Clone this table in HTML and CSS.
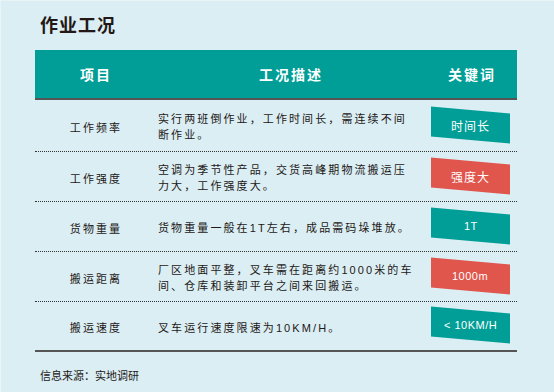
FILE: index.html
```html
<!DOCTYPE html>
<html lang="zh-CN">
<head>
<meta charset="utf-8">
<link rel="stylesheet" href="styles.css">
</head>
<body>
<div class="page">
  <h1 class="title">作业工况</h1>
  <div class="table">
    <div class="head">
      <div class="c1">项目</div>
      <div class="c2">工况描述</div>
      <div class="c3">关键词</div>
    </div>
    <div class="row first">
      <div class="c1">工作频率</div>
      <div class="c2 desc">实行两班倒作业，工作时间长，需连续不间断作业。</div>
      <div class="c3"><div class="tag teal"><span>时间长</span></div></div>
    </div>
    <div class="row">
      <div class="c1">工作强度</div>
      <div class="c2 desc">空调为季节性产品，交货高峰期物流搬运压力大，工作强度大。</div>
      <div class="c3"><div class="tag red"><span>强度大</span></div></div>
    </div>
    <div class="row">
      <div class="c1">货物重量</div>
      <div class="c2 desc">货物重量一般在1T左右，成品需码垛堆放。</div>
      <div class="c3"><div class="tag teal"><span class="latin">1T</span></div></div>
    </div>
    <div class="row">
      <div class="c1">搬运距离</div>
      <div class="c2 desc">厂区地面平整，叉车需在距离约1000米的车间、仓库和装卸平台之间来回搬运。</div>
      <div class="c3"><div class="tag red"><span class="latin">1000m</span></div></div>
    </div>
    <div class="row last">
      <div class="c1">搬运速度</div>
      <div class="c2 desc">叉车运行速度限速为10KM/H。</div>
      <div class="c3"><div class="tag teal"><span class="latin">&lt; 10KM/H</span></div></div>
    </div>
  </div>
  <p class="source">信息来源：实地调研</p>
</div>
</body>
</html>
```

FILE: styles.css
```css
html, body {
  margin: 0;
  padding: 0;
}
body {
  width: 554px;
  height: 392px;
  overflow: hidden;
  background: #dbeef4;
  font-family: "Liberation Sans", "Noto Sans CJK SC", sans-serif;
  color: #231815;
}
.page {
  box-sizing: border-box;
  width: 554px;
  height: 392px;
  padding-top: 13px;
  border-top: 1px solid #eaf4f7;
  border-left: 1px solid #eaf4f7;
}
.title {
  margin: 0 0 12px 39px;
  font-size: 18px;
  line-height: 24px;
  font-weight: bold;
  letter-spacing: 1px;
}
.table {
  margin-left: 34px;
  width: 482px;
}
.head, .row {
  display: grid;
  grid-template-columns: 120px 270px 92px;
  align-items: center;
}
.head {
  box-sizing: border-box;
  height: 50px;
  background: #009e96;
  border-bottom: 2px solid #555;
  color: #fff;
  font-size: 14px;
  font-weight: bold;
  letter-spacing: 2px;
}
.head > div {
  text-align: center;
  padding-left: 2px;
}
.row {
  box-sizing: border-box;
  height: 50px;
  border-bottom: 1px dotted #333;
  font-size: 11px;
  letter-spacing: 2.1px;
}
.row.first {
  height: 52px;
}
.row.last {
  border-bottom: 2px solid #555;
}
.row .c1 {
  text-align: center;
  padding-left: 2px;
  padding-top: 2px;
}
.desc {
  padding: 3px 8px 0 3px;
  line-height: 16px;
}
.c3 {
  display: flex;
  justify-content: center;
}
.tag {
  width: 79px;
  height: 30px;
  transform: skewY(5deg);
  display: flex;
  align-items: center;
  justify-content: center;
  margin-top: -2px;
  margin-left: -1px;
}
.tag span {
  transform: skewY(-5deg);
  color: #fff;
  font-size: 12px;
  letter-spacing: 1px;
}
.tag span.latin {
  font-size: 11px;
  letter-spacing: 0.5px;
}
.tag.teal {
  background: #009e96;
}
.tag.red {
  background: #e0554c;
}
.source {
  margin: 16px 0 0 39px;
  font-size: 11px;
  line-height: 16px;
}
```
